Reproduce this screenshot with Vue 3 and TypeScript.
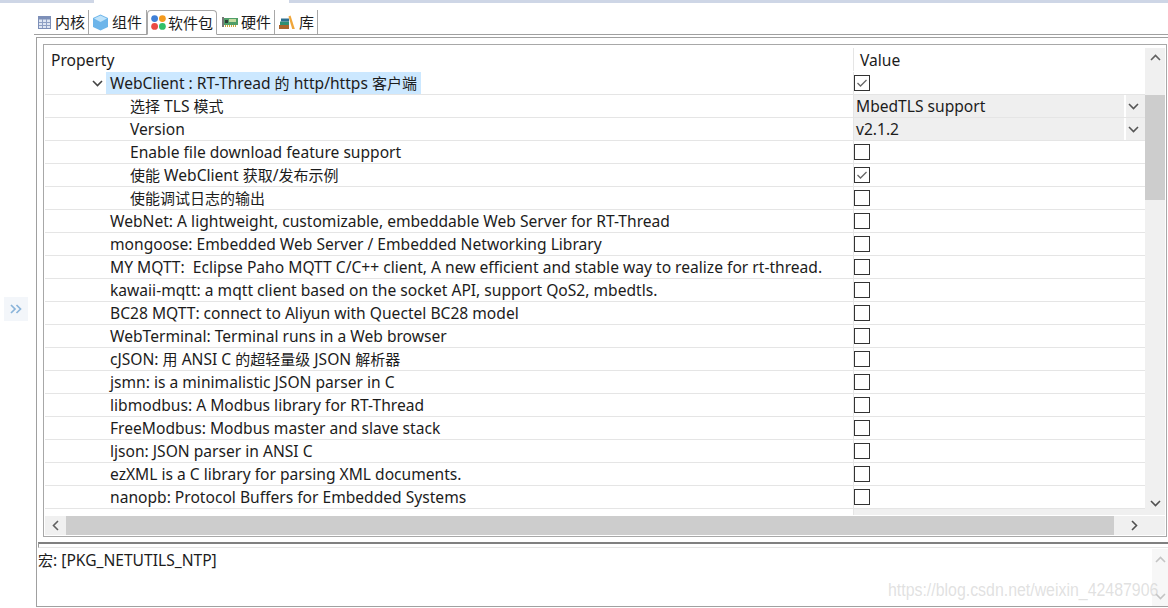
<script setup lang="ts">
type Row = { text: string; indent?: boolean; open?: boolean; kind: 'check' | 'combo'; checked?: boolean; value?: string }
const rows: Row[] = [
  { text: 'WebClient : RT-Thread 的 http/https 客户端', open: true, kind: 'check', checked: true },
  { text: '选择 TLS 模式', indent: true, kind: 'combo', value: 'MbedTLS support' },
  { text: 'Version', indent: true, kind: 'combo', value: 'v2.1.2' },
  { text: 'Enable file download feature support', indent: true, kind: 'check' },
  { text: '使能 WebClient 获取/发布示例', indent: true, kind: 'check', checked: true },
  { text: '使能调试日志的输出', indent: true, kind: 'check' },
  { text: 'WebNet: A lightweight, customizable, embeddable Web Server for RT-Thread', kind: 'check' },
  { text: 'mongoose: Embedded Web Server / Embedded Networking Library', kind: 'check' },
  { text: 'MY MQTT:  Eclipse Paho MQTT C/C++ client, A new efficient and stable way to realize for rt-thread.', kind: 'check' },
  { text: 'kawaii-mqtt: a mqtt client based on the socket API, support QoS2, mbedtls.', kind: 'check' },
  { text: 'BC28 MQTT: connect to Aliyun with Quectel BC28 model', kind: 'check' },
  { text: 'WebTerminal: Terminal runs in a Web browser', kind: 'check' },
  { text: 'cJSON: 用 ANSI C 的超轻量级 JSON 解析器', kind: 'check' },
  { text: 'jsmn: is a minimalistic JSON parser in C', kind: 'check' },
  { text: 'libmodbus: A Modbus library for RT-Thread', kind: 'check' },
  { text: 'FreeModbus: Modbus master and slave stack', kind: 'check' },
  { text: 'ljson: JSON parser in ANSI C', kind: 'check' },
  { text: 'ezXML is a C library for parsing XML documents.', kind: 'check' },
  { text: 'nanopb: Protocol Buffers for Embedded Systems', kind: 'check' },
]
// Chinese runs are set a little smaller than the Latin ones, as in the reference.
function runs(text: string) {
  return text.split(/([\u4e00-\u9fff]+)/).map((t, i) => ({ t, cjk: i % 2 === 1 })).filter((s) => s.t)
}
</script>

<template>
  <div class="app">
    <div class="topstrip"><i class="strip-a"></i><i class="strip-b"></i></div>
    <div class="tabs">
      <div class="tab tab-kernel">
        <svg width="13" height="13" viewBox="0 0 13 13"><rect x="0.5" y="0.5" width="12" height="12" fill="#dfe6f3" stroke="#7d8fb8"/><rect x="1" y="1" width="11" height="2.5" fill="#7d8fb8"/><path d="M4.500 3v9M8.500 3v9M1 6.500h11M1 9.500h11" stroke="#8fa0c4"/></svg>
        <span>内核</span>
      </div>
      <div class="tab tab-comp">
        <svg width="17" height="17" viewBox="0 0 17 17"><path d="M8.500 0.500 16 4v9l-7.500 3.500L1 13V4z" fill="#6db5ea"/><path d="M8.500 1.500 15 4.600 8.500 8 2 4.600z" fill="#bfe3fa"/></svg>
        <span>组件</span>
      </div>
      <div class="tab tab-pkg">
        <svg width="15" height="15" viewBox="0 0 15 15"><circle cx="3.600" cy="3.600" r="3.400" fill="#3f7fd6"/><circle cx="11.400" cy="3.600" r="3.400" fill="#f39a1e"/><circle cx="3.600" cy="11.400" r="3.400" fill="#ea4a44"/><circle cx="11.400" cy="11.400" r="3.400" fill="#2fc06a"/></svg>
        <span>软件包</span>
      </div>
      <div class="tab tab-hw">
        <svg width="16" height="11" viewBox="0 0 16 11"><rect x="0" y="1" width="16" height="7" fill="#4f9e68"/><rect x="0" y="0" width="2" height="10" fill="#777"/><rect x="3" y="3" width="3" height="3" fill="#2c3f33"/><rect x="7" y="2" width="7" height="3" fill="#c5dba0"/><path d="M3 9h12" stroke="#c9a53a" stroke-width="2" stroke-dasharray="1 1"/></svg>
        <span>硬件</span>
      </div>
      <div class="tab tab-lib">
        <svg width="16" height="15" viewBox="0 0 16 15"><rect x="0" y="10" width="10" height="4" fill="#a9642a"/><rect x="1" y="6.500" width="9" height="3.500" fill="#2f8f72"/><rect x="2" y="3.500" width="8" height="3" fill="#2d6f8f"/><path d="M9.500 1.500 11.500 0.600 15.800 14h-2.600z" fill="#f0a63a"/></svg>
        <span>库</span>
      </div>
    </div>
    <div class="body">
      <div class="rail">
        <div class="restore"><svg width="12" height="10" viewBox="0 0 12 10"><path d="M1 1l4 4-4 4M6.500 1l4 4-4 4" fill="none" stroke="#8ab4da" stroke-width="1.7"/></svg></div>
      </div>
      <div class="pane">
        <div class="frame">
          <div class="table-area">
            <div class="list">
              <div class="head">
                <div class="c-prop head-prop">Property</div>
                <div class="c-val head-val">Value</div>
              </div>
              <div v-for="r in rows" :key="r.text" class="row">
                <div class="c-prop" :class="{ 'in-1': !r.indent, 'in-2': r.indent }">
                  <svg v-if="r.open" class="twist" width="11" height="7" viewBox="0 0 11 7"><path d="M1 1l4.500 4.500L10 1" fill="none" stroke="#444" stroke-width="1.6"/></svg>
                  <span class="label" :class="{ sel: r.open }"><span v-for="(s, i) in runs(r.text)" :key="i" :class="{ cjk: s.cjk }">{{ s.t }}</span></span>
                </div>
                <div v-if="r.kind === 'check'" class="c-val">
                  <span class="box">
                    <svg v-if="r.checked" width="14" height="14" viewBox="0 0 14 14"><path d="M2.500 7l3 3 6-6" fill="none" stroke="#666" stroke-width="1.3"/></svg>
                  </span>
                </div>
                <div v-else class="c-val combo">
                  <span class="combo-text">{{ r.value }}</span>
                  <span class="combo-btn"><svg width="11" height="7" viewBox="0 0 11 7"><path d="M1 1l4.500 4.500L10 1" fill="none" stroke="#555" stroke-width="1.6"/></svg></span>
                </div>
              </div>
              <div class="rest"><i class="rest-l"></i><i class="rest-r"></i></div>
            </div>
            <div class="vbar">
              <svg width="11" height="7" viewBox="0 0 11 7"><path d="M1 6l4.500-4.500L10 6" fill="none" stroke="#606060" stroke-width="1.6"/></svg>
              <i class="vthumb"></i>
              <svg class="vdown" width="11" height="7" viewBox="0 0 11 7"><path d="M1 1l4.500 4.500L10 1" fill="none" stroke="#505050" stroke-width="1.6"/></svg>
            </div>
          </div>
          <div class="hbar">
            <span class="h-btn"><svg width="7" height="11" viewBox="0 0 7 11"><path d="M6 1 1.500 5.500 6 10" fill="none" stroke="#606060" stroke-width="1.6"/></svg></span>
            <i class="hthumb"></i>
            <span class="h-btn right"><svg width="7" height="11" viewBox="0 0 7 11"><path d="M1 1l4.500 4.500L1 10" fill="none" stroke="#505050" stroke-width="1.6"/></svg></span>
          </div>
        </div>
        <div class="sash"></div>
        <div class="macro">
          <div class="macro-text"><span class="cjk">宏</span>: [PKG_NETUTILS_NTP]</div>
          <div class="macro-bar">
            <svg width="11" height="7" viewBox="0 0 11 7"><path d="M1 6l4.500-4.500L10 6" fill="none" stroke="#c4c4c4" stroke-width="1.6"/></svg>
            <svg width="11" height="7" viewBox="0 0 11 7"><path d="M1 1l4.500 4.500L10 1" fill="none" stroke="#c4c4c4" stroke-width="1.6"/></svg>
          </div>
        </div>
      </div>
    </div>
    <div class="watermark">https://blog.csdn.net/weixin_42487906</div>
  </div>
</template>

<style scoped>
.app {
  position: relative;
  width: 1168px;
  height: 608px;
  overflow: hidden;
  background: #fff;
  color: #1c1c1c;
  font-family: "Noto Sans", "Noto Sans CJK SC", sans-serif;
  font-size: 15.6px;
  display: flex;
  flex-direction: column;
}
.cjk { font-size: 15px; }
.topstrip { height: 3px; display: flex; justify-content: space-between; }
.strip-a { width: 94px; background: #ced6e6; }
.strip-b { width: 879px; background: #ced6e6; }
.tabs {
  height: 32px;
  margin-left: 34px;
  box-sizing: border-box;
  padding-top: 7px;
  display: flex;
  border-bottom: 1px solid #a0a0a0;
  font-size: 15px;
}
.tab { display: flex; align-items: center; height: 24px; box-sizing: border-box; border-right: 1px solid #a8a8a8; }
.tab span { line-height: 24px; }
.tab-kernel { width: 55px; padding-left: 4px; gap: 4px; }
.tab-comp { width: 58px; padding-left: 3px; gap: 3px; }
.tab-pkg {
  width: 70px; padding-left: 3px; gap: 2px;
  border: 1px solid #a8a8a8; border-bottom: 1px solid #fff;
  border-radius: 4px 4px 0 0; height: 25px;
}
.tab-hw { width: 58px; padding-left: 5px; gap: 3px; }
.tab-lib { width: 43px; padding-left: 4px; gap: 4px; }
.body { display: flex; height: 571px; padding-top: 2px; box-sizing: border-box; }
.rail { width: 36px; flex: none; padding: 260px 0 0 4px; box-sizing: border-box; }
.restore {
  width: 24px; height: 24px; background: #f3f6fa;
  display: flex; align-items: center; justify-content: center;
}
.pane {
  width: 1132px;
  height: 570px;
  box-sizing: border-box;
  border: 1px solid #a0a0a0;
  border-right: none;
  padding-top: 6px;
  display: flex;
  flex-direction: column;
}
.frame {
  width: 1124px;
  height: 493px;
  margin-left: 6px;
  box-sizing: border-box;
  border: 1px solid #a8a8a8;
  padding: 3px 1px 1px;
  display: flex;
  flex-direction: column;
}
.table-area { display: flex; height: 467px; }
.list { width: 1100px; flex: none; display: flex; flex-direction: column; }
.head { display: flex; height: 24px; padding-bottom: 1px; box-sizing: border-box; }
.row { display: flex; height: 23px; box-sizing: border-box; border-bottom: 1px solid #e5e5e5; }
.c-prop {
  width: 809px; flex: none; box-sizing: border-box;
  border-right: 1px solid #e5e5e5;
  white-space: pre; display: flex; align-items: center; position: relative;
}
.c-val { width: 291px; flex: none; display: flex; align-items: center; }
.head-prop { padding-left: 6px; }
.head-val { padding-left: 6px; }
.in-1 { padding-left: 65px; }
.in-2 { padding-left: 85px; }
.label { line-height: 22px; }
.sel { background: #cce8ff; margin-left: -4px; padding: 0 4px; }
.twist { position: absolute; left: 47px; top: 8px; }
.box {
  width: 16px; height: 16px; box-sizing: border-box;
  border: 1px solid #333; display: flex; align-items: center; justify-content: center;
  background: #fff;
}
.combo { background: #efefef; justify-content: space-between; }
.combo-text { padding-left: 2px; }
.combo-btn {
  width: 21px; height: 22px; border-left: 2px solid #fff; padding-right: 4px; box-sizing: border-box;
  display: flex; align-items: center; justify-content: center;
}
.rest { height: 6px; display: flex; }
.rest-l { width: 809px; box-sizing: border-box; border-right: 1px solid #e5e5e5; }
.rest-r { width: 291px; background: #f0f0f0; }
.vbar {
  width: 20px; background: #f0f0f0; display: flex; flex-direction: column; align-items: center;
  padding-top: 6px; box-sizing: border-box; position: relative;
}
.vthumb { display: block; width: 20px; height: 105px; margin-top: 34px; background: #cdcdcd; }
.vdown { margin-top: auto; margin-bottom: 8px; }
.hbar {
  height: 19px; margin-top: 1px; background: #f0f0f0; display: flex; align-items: center;
}
.h-btn { width: 21px; display: flex; align-items: center; justify-content: center; flex: none; }
.h-btn.right { width: 51px; padding-right: 10px; box-sizing: border-box; }
.hthumb { display: block; flex: 1; height: 19px; background: #cdcdcd; }
.sash { margin-top: 5px; margin-left: 1px; box-sizing: border-box; border-top: 2px solid #808080; border-left: 1px solid #999; border-bottom: 1px solid #e5e5e5; height: 6px; }
.macro { flex: 1; display: flex; justify-content: space-between; margin-left: 1px; min-height: 0; }
.macro-text { line-height: 22px; padding-top: 1px; }
.macro-bar {
  width: 16px; background: #f7f7f7; display: flex; flex-direction: column; align-items: center;
  justify-content: space-between; padding: 7px 0 6px; box-sizing: border-box; margin-top: 1px;
}
.watermark {
  position: absolute; left: 888px; top: 581px;
  font-family: "Liberation Sans", sans-serif; font-size: 15.9px; color: rgba(200,200,200,0.55);
  white-space: nowrap;
  transform: scaleY(1.15);
}
</style>
